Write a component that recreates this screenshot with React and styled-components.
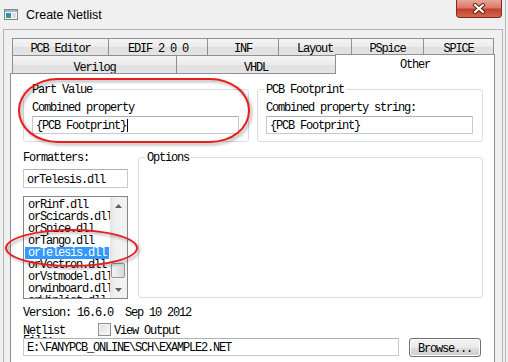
import React from 'react'
import styled, { createGlobalStyle, css } from 'styled-components'

const GlobalStyle = createGlobalStyle`
  html, body {
    margin: 0;
    padding: 0;
  }
  body {
    width: 508px;
    height: 362px;
    overflow: hidden;
    background: #f0f0f0;
    font-family: "Liberation Mono", "Courier New", monospace;
    font-size: 12px;
    letter-spacing: -1.2px;
    color: #000;
  }
`

const Window = styled.div`
  position: relative;
  width: 506px;
  height: 362px;
  box-sizing: border-box;
  border-right: 1px solid #b4b4b4;
  overflow: hidden;
  display: flex;
  flex-direction: column;
`

const TitleBar = styled.div`
  height: 29px;
  flex: none;
  display: flex;
  align-items: center;
  padding-left: 4px;
  box-sizing: border-box;
  font-family: "Liberation Sans", Arial, sans-serif;
  font-size: 12.5px;
  letter-spacing: 0;
`

const Title = styled.span`
  margin-left: 8px;
  margin-top: 1px;
`

const CloseButton = styled.div`
  margin-left: auto;
  margin-right: 3px;
  align-self: flex-start;
  width: 46px;
  height: 18px;
  box-sizing: border-box;
  border: 1px solid #7e2a20;
  border-top: none;
  border-radius: 0 0 4px 4px;
  background: linear-gradient(#eaa597, #d9796a 45%, #c3412d 55%, #d4664f);
  display: flex;
  align-items: center;
  justify-content: center;
`

const Frame = styled.div`
  flex: 1;
  margin-left: 3px;
  width: 500px;
  box-sizing: border-box;
  border: 1px solid #b4b4b4;
  border-bottom: none;
  padding: 8px 0 0 6px;
  display: flex;
  flex-direction: column;
  min-height: 0;
`

const TabControl = styled.div`
  width: 485px;
  flex: 1;
  display: flex;
  flex-direction: column;
  min-height: 0;
`

const TabRow = styled.div`
  display: flex;
  height: ${p => p.$h}px;
  padding-left: 2px;
  flex: none;
`

const Tab = styled.div`
  box-sizing: border-box;
  width: ${p => p.$w}px;
  margin-right: -1px;
  border: 1px solid #8e9096;
  border-bottom: none;
  background: linear-gradient(#f4f4f4, #ececec 50%, #e0e0e0 50%, #e4e4e4);
  display: flex;
  align-items: center;
  justify-content: center;
  padding-top: ${p => p.$pt || 0}px;
  line-height: 12px;

  ${p => p.$active && css`
    position: relative;
    z-index: 1;
    background: #fff;
    margin-top: -1px;
    height: calc(100% + 2px);
    padding-top: 0;
  `}
`

const Page = styled.div`
  flex: 1;
  box-sizing: border-box;
  background: #fff;
  border: 1px solid #8e9096;
  border-bottom: none;
  padding: 8px 11px 0 12px;
  display: flex;
  flex-direction: column;
`

const TopRow = styled.div`
  display: grid;
  grid-template-columns: 226px 226px;
  gap: 8px;
`

const Group = styled.fieldset`
  margin: 0;
  min-width: 0;
  border: 1px solid #d5dfe5;
  border-radius: 3px;
  padding: 0 9px 7px 8px;
  ${p => p.$fill && css`
    margin-bottom: 1px;
  `}
`

const Legend = styled.legend`
  padding: 0 2px;
  margin-left: -2px;
  line-height: 12px;
`

const LegendText = styled.span`
  display: inline-block;
  height: 12px;
  padding-top: 2px;
  box-sizing: border-box;
`

const FieldLabel = styled.div`
  height: 13px;
  line-height: 12px;
  padding-top: 2px;
  box-sizing: border-box;
  margin-top: 4px;
  white-space: nowrap;
`

const TextBox = styled.div`
  box-sizing: border-box;
  width: ${p => p.$w ? `${p.$w}px` : '100%'};
  height: ${p => p.$h || 18}px;
  margin-top: ${p => p.$mt || 0}px;
  border: 1px solid #c2cad4;
  border-top-color: #abb1ba;
  border-radius: 1px;
  background: #fff;
  padding: 2px 3px 0;
  line-height: 12px;
  display: flex;
  align-items: center;
  white-space: nowrap;
  overflow: hidden;
`

const Caret = styled.span`
  display: inline-block;
  width: 1px;
  height: 13px;
  background: #000;
  margin-left: 1px;
  margin-top: -2px;
`

const MiddleRow = styled.div`
  margin-top: 8px;
  display: grid;
  grid-template-columns: 105px 1fr;
  gap: 10px;
`

const LeftColumn = styled.div`
  display: flex;
  flex-direction: column;
`

const PlainLabel = styled.div`
  height: 12px;
  line-height: 12px;
  padding-top: 2px;
  box-sizing: border-box;
  white-space: nowrap;
`

const ListBox = styled.div`
  margin-top: 8px;
  height: 103px;
  box-sizing: border-box;
  border: 1px solid #828790;
  background: #fff;
  display: flex;
  overflow: hidden;
`

const Items = styled.div`
  flex: 1;
  min-width: 0;
  padding-top: 2px;
  overflow: hidden;
`

const Item = styled.div`
  height: 12px;
  line-height: 13px;
  width: 84px;
  margin-left: 1px;
  padding-left: 3px;
  box-sizing: border-box;
  white-space: nowrap;
  ${p => p.$selected && css`
    background: #3399ff;
    color: #fff;
  `}
`

const ScrollBar = styled.div`
  width: 17px;
  flex: none;
  background: linear-gradient(90deg, #e3e3e3, #f1f1f1 30%, #f1f1f1);
  display: flex;
  flex-direction: column;
  align-items: center;
`

const Arrow = styled.div`
  height: 17px;
  flex: none;
  display: flex;
  align-items: center;
  justify-content: center;
`

const Track = styled.div`
  flex: 1;
  width: 100%;
  display: flex;
  flex-direction: column;
  align-items: center;
`

const Thumb = styled.div`
  width: 14px;
  height: 15px;
  margin-top: ${p => p.$top}px;
  margin-left: -2px;
  box-sizing: border-box;
  border: 1px solid #979797;
  border-radius: 2px;
  background: linear-gradient(90deg, #f3f3f3, #e6e6e6 50%, #d8d8d8);
`

const BottomLine = styled.div`
  line-height: 12px;
  padding-top: 1px;
  margin-top: 7px;
  white-space: pre;
`

const CheckRow = styled.div`
  margin-top: 4px;
  height: 15px;
  display: flex;
  align-items: flex-start;
`

const NetLabel = styled.div`
  width: 75px;
  height: 15px;
  line-height: 10px;
  padding-top: 3px;
  box-sizing: border-box;
  overflow: hidden;
`

const CheckBox = styled.div`
  width: 13px;
  height: 13px;
  box-sizing: border-box;
  border: 1px solid #8f8f8f;
  background: linear-gradient(135deg, #dcdcdc, #fafafa);
  box-shadow: inset 0 0 0 1px #f4f4f4;
`

const CheckText = styled.span`
  margin-left: 3px;
  line-height: 12px;
  padding-top: 2px;
`

const PathRow = styled.div`
  display: flex;
  gap: 10px;
  align-items: flex-start;
`

const Button = styled.div`
  width: 72px;
  height: 19px;
  box-sizing: border-box;
  border: 1px solid #707070;
  border-radius: 3px;
  background: linear-gradient(#f2f2f2, #ebebeb 50%, #dddddd 50%, #cfcfcf);
  box-shadow: inset 0 0 0 1px #fcfcfc;
  padding-top: 2px;
  line-height: 12px;
  display: flex;
  align-items: center;
  justify-content: center;
`

const Oval = styled.div`
  position: absolute;
  left: ${p => p.$x}px;
  top: ${p => p.$y}px;
  width: ${p => p.$w}px;
  height: ${p => p.$h}px;
  box-sizing: border-box;
  border: 2.5px solid #ea1c1c;
  border-radius: ${p => p.$r};
  filter: drop-shadow(2px 2px 1.5px rgba(0, 0, 0, 0.35));
  pointer-events: none;
`

const AppIcon = () => (
  <svg width="14" height="11" viewBox="0 0 14 11">
    <rect x="0.5" y="0.5" width="13" height="10" fill="#f3f5f7" stroke="#7c8794" />
    <rect x="1" y="1" width="12" height="2" fill="#a7b6c6" />
    <rect x="2" y="4" width="5" height="5" fill="#2f88c0" />
    <rect x="2" y="7" width="5" height="2" fill="#3aa36a" />
    <rect x="8" y="4" width="4" height="5" fill="#d9dee4" />
  </svg>
)

const CloseIcon = () => (
  <svg width="14" height="11" viewBox="0 0 14 11">
    <path d="M3 2 L11 9 M11 2 L3 9" stroke="#5a1e16" strokeWidth="4" strokeLinecap="round" />
    <path d="M3 2 L11 9 M11 2 L3 9" stroke="#fff" strokeWidth="2.2" strokeLinecap="round" />
  </svg>
)

const UpArrow = () => (
  <svg width="7" height="4" viewBox="0 0 7 4">
    <path d="M0 4 L3.5 0 L7 4 Z" fill="#606060" />
  </svg>
)

const DownArrow = () => (
  <svg width="7" height="4" viewBox="0 0 7 4">
    <path d="M0 0 L3.5 4 L7 0 Z" fill="#606060" />
  </svg>
)

const backTabs = [
  ['PCB Editor', 97],
  ['EDIF 2 0 0', 100],
  ['INF', 72],
  ['Layout', 74],
  ['PSpice', 73],
  ['SPICE', 71],
]

const frontTabs = [
  ['Verilog', 165],
  ['VHDL', 160],
  ['Other', 160],
]

const formatters = [
  'orRinf.dll',
  'orScicards.dll',
  'orSpice.dll',
  'orTango.dll',
  'orTelesis.dll',
  'orVectron.dll',
  'orVstmodel.dll',
  'orwinboard.dll',
  'orWinlist.dll',
]

const App = () => (
  <Window>
    <GlobalStyle />
    <TitleBar>
      <AppIcon />
      <Title>Create Netlist</Title>
      <CloseButton>
        <CloseIcon />
      </CloseButton>
    </TitleBar>

    <Frame>
      <TabControl>
        <TabRow $h={17}>
          {backTabs.map(([name, w]) => (
            <Tab key={name} $w={w} $pt={4}>{name}</Tab>
          ))}
        </TabRow>
        <TabRow $h={18}>
          {frontTabs.map(([name, w]) => (
            <Tab key={name} $w={w} $pt={7} $active={name === 'Other'}>{name}</Tab>
          ))}
        </TabRow>

        <Page>
          <TopRow>
            <Group>
              <Legend><LegendText>Part Value</LegendText></Legend>
              <FieldLabel>Combined property</FieldLabel>
              <TextBox $mt={3}>
                {'{PCB Footprint}'}<Caret />
              </TextBox>
            </Group>
            <Group>
              <Legend><LegendText>PCB Footprint</LegendText></Legend>
              <FieldLabel>Combined property string:</FieldLabel>
              <TextBox $mt={3}>{'{PCB Footprint}'}</TextBox>
            </Group>
          </TopRow>

          <MiddleRow>
            <LeftColumn>
              <PlainLabel>Formatters:</PlainLabel>
              <TextBox $mt={7} $h={19}>orTelesis.dll</TextBox>
              <ListBox>
                <Items>
                  {formatters.map(f => (
                    <Item key={f} $selected={f === 'orTelesis.dll'}>{f}</Item>
                  ))}
                </Items>
                <ScrollBar>
                  <Arrow><UpArrow /></Arrow>
                  <Track>
                    <Thumb $top={49} />
                  </Track>
                  <Arrow><DownArrow /></Arrow>
                </ScrollBar>
              </ListBox>
            </LeftColumn>
            <Group $fill>
              <Legend><LegendText>Options</LegendText></Legend>
            </Group>
          </MiddleRow>

          <BottomLine>Version: 16.6.0  Sep 10 2012</BottomLine>
          <CheckRow>
            <NetLabel>Netlist File:</NetLabel>
            <CheckBox />
            <CheckText>View Output</CheckText>
          </CheckRow>
          <PathRow>
            <TextBox $w={376}>E:\FANYPCB_ONLINE\SCH\EXAMPLE2.NET</TextBox>
            <Button>Browse...</Button>
          </PathRow>
        </Page>
      </TabControl>
    </Frame>

    <Oval $x={18} $y={78} $w={232} $h={65} $r="40px / 32px" />
    <Oval $x={5} $y={229} $w={133} $h={38} $r="50%" />
  </Window>
)

export default App
